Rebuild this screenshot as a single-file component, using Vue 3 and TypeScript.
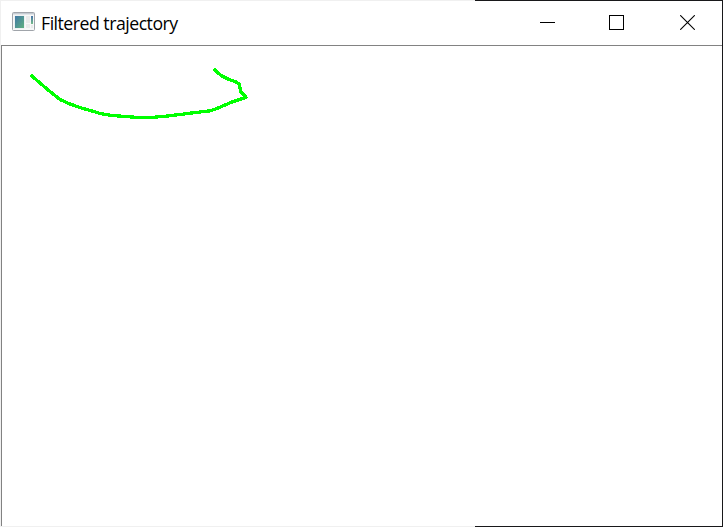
<script setup lang="ts">
const title: string = 'Filtered trajectory'
const trajectory: [number, number][] = [
  [32, 76], [40, 83], [50, 91.5], [60, 99.5], [70, 104], [80, 107.5], [92, 111], [101, 113.7],
  [112, 115.5], [125, 116.5], [137, 117.4], [152, 117.4], [165, 116.3], [180, 114.5], [195, 112.6],
  [211, 110.7], [220, 107.2], [232, 102], [246, 97.3], [241, 92], [239, 84],
  [236, 82], [228, 79], [221, 75.5], [215, 70],
]
const points: string = trajectory.map((p) => p.join(',')).join(' ')
</script>

<template>
  <main class="window">
    <header class="titlebar">
      <svg class="app-icon" width="23" height="20" viewBox="0 0 23 20">
        <defs>
          <linearGradient id="preview" x1="0" y1="0" x2="1" y2="1">
            <stop offset="0" stop-color="#4178a6" />
            <stop offset="1" stop-color="#5fb080" />
          </linearGradient>
          <linearGradient id="side" x1="0" y1="0" x2="0" y2="1">
            <stop offset="0" stop-color="#4874a8" />
            <stop offset="1" stop-color="#75bc89" />
          </linearGradient>
        </defs>
        <rect x=".5" y=".5" width="22" height="18" rx="1" fill="#f7f8f8" stroke="#a0a4aa" />
        <path d="M1 1.5H22" stroke="#c5cbd2" />
        <path d="M1 2.5H22" stroke="#e2e5e8" />
        <rect x="2.5" y="3.5" width="10" height="13" fill="#e3e9eb" />
        <rect x="3" y="4" width="9" height="12" fill="url(#preview)" />
        <path d="M14 4H18V11H14ZM14 12H18V16H14Z" fill="#e9eaea" />
        <rect x="19" y="4" width="2" height="8" fill="url(#side)" />
        <rect x="19" y="13" width="2" height="3" fill="#e9eaea" />
      </svg>
      <h1 class="title">{{ title }}</h1>
      <div class="controls">
        <button class="control" aria-label="Minimize">
          <svg width="15" height="15" shape-rendering="crispEdges"><path d="M0 7.5H15" /></svg>
        </button>
        <button class="control" aria-label="Maximize">
          <svg width="15" height="15" shape-rendering="crispEdges"><rect x=".5" y=".5" width="14" height="14" /></svg>
        </button>
        <button class="control" aria-label="Close">
          <svg width="15" height="15"><path class="cross" d="M.2 .2L14.8 14.8M14.8 .2L.2 14.8" /></svg>
        </button>
      </div>
    </header>
    <section class="canvas">
      <svg width="720" height="480" viewBox="2 46 720 480" shape-rendering="crispEdges">
        <polyline :points="points" />
      </svg>
    </section>
  </main>
</template>

<style>
body {
  margin: 0;
  overflow: hidden;
}
</style>

<style scoped>
.window {
  box-sizing: border-box;
  width: 723px;
  height: 527px;
  display: flex;
  flex-direction: column;
  padding: 1px;
  background:
    linear-gradient(#fff, #fff) 1px 1px / 721px 525px no-repeat,
    linear-gradient(90deg, #f0f0f0 475px, #18181a 475px);
}
.titlebar {
  box-sizing: border-box;
  height: 44px;
  flex: none;
  display: flex;
  align-items: flex-start;
  padding: 11px 0 0 11px;
}
.app-icon {
  flex: none;
}
.title {
  margin: -1px 0 0 6px;
  font: 400 17.7px/24px "Segoe UI", "Open Sans", "Noto Sans", sans-serif;
  color: #000;
  letter-spacing: -0.5px;
  white-space: nowrap;
}
.controls {
  display: flex;
  margin: 3px 27px 0 auto;
}
.control {
  display: flex;
  width: 15px;
  height: 15px;
  padding: 0;
  border: 0;
  background: none;
}
.control:nth-child(2) {
  margin-left: 54px;
}
.control:last-child {
  margin-left: 56px;
}
.control path,
.control rect {
  fill: none;
  stroke: #000;
  stroke-width: 1;
}
.control .cross {
  stroke-width: 1.08;
}
.canvas {
  flex: 1;
  min-height: 0;
  border-top: 1px solid #828282;
  border-left: 1px solid #828282;
}
.canvas svg {
  display: block;
}
.canvas polyline {
  fill: none;
  stroke: #0f0;
  stroke-width: 3.3;
  stroke-linecap: round;
  stroke-linejoin: round;
}
</style>
